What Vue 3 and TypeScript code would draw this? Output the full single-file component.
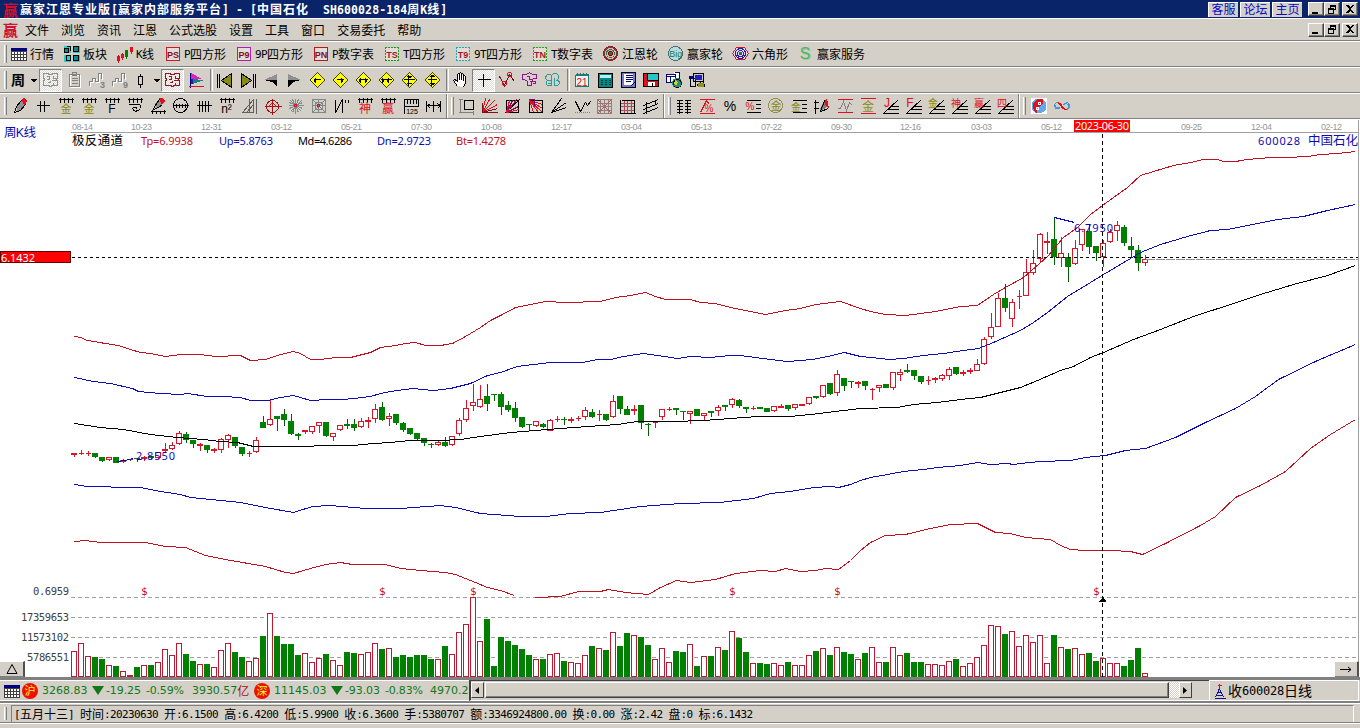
<script setup lang="ts">
import { h } from 'vue'

type Part = [kind: 's' | 'f' | 't', color: string, d: string]
interface Bar { x: number; up: boolean; high: number; low: number; top: number; bottom: number; vol: number }

/* Splits mixed text so that ideographs and half-width characters keep a 2:1 cell */
const Mixed = (props: { text: string }) =>
  h('span', { class: 'mixed' },
    (props.text.match(/[\u4e00-\u9fff]+|[^\u4e00-\u9fff]+/g) ?? []).map(run =>
      h('span', { class: /[\u4e00-\u9fff]/.test(run) ? 'cjk' : 'half' }, run)))
Mixed.props = ['text']

/* Small icons on a 20x20 grid */
const Icon = (props: { parts: Part[] }) =>
  h('svg', { class: 'icon', viewBox: '0 0 20 20', width: 20, height: 20 },
    props.parts.map(([kind, color, d]) => {
      if (kind === 't') {
        const [x, y, size, label, weight] = d.split(' ')
        return h('text', { x, y, 'font-size': size, fill: color, 'text-anchor': 'middle', 'font-weight': weight ?? '400' }, label)
      }
      return kind === 's'
        ? h('path', { d, stroke: color, fill: 'none', transform: 'translate(.5 .5)' })
        : h('path', { d, fill: color })
    }))
Icon.props = ['parts']

const K = '#000', R = '#e01020', G = '#808080', O = '#8a8a10', T = '#2a9a9a', N = '#000080', W = '#fff'
const circle = (cx: number, cy: number, r: number) => `M${cx - r} ${cy}a${r} ${r} 0 1 0 ${2 * r} 0a${r} ${r} 0 1 0 ${-2 * r} 0`
const comb: Part = ['s', K, 'M2 3H17M4 1V6M8 1V6M12 1V6M16 1V6']
const boxed = (label: string, frame: string, dashed = false): Part[] => [
  ['f', frame, 'M3 3H17V17H3Z'],
  ['f', '#e4dcd8', 'M4 4H16V16H4Z'],
  ...(dashed ? [['f', '#d4d0c8', 'M5 3h1v1h-1zM8 3h1v1h-1zM11 3h1v1h-1zM14 3h1v1h-1zM5 16h1v1h-1zM8 16h1v1h-1zM11 16h1v1h-1zM14 16h1v1h-1zM3 5h1v1h-1zM3 8h1v1h-1zM3 11h1v1h-1zM3 14h1v1h-1zM16 5h1v1h-1zM16 8h1v1h-1zM16 11h1v1h-1zM16 14h1v1h-1z'] as Part] : []),
  ['t', label[0] === 'P' ? '#801020' : '#a01828', `10 13.500 9 ${label} 700`],
]
const ring: Part[] = [['f', '#d8b8b0', circle(9.5, 9.5, 7)], ['s', '#902028', circle(9, 9, 7)], ['s', '#803838', circle(9, 9, 6)], ['s', '#207850', circle(9, 9, 4)], ['s', '#800000', circle(9, 9, 2)], ['f', '#207850', 'M8 8h3v3h-3z']]

const functions: { label: string; w: number; parts: Part[] }[] = [
  { label: '行情', w: 53, parts: [['f', W, 'M2 4H18V17H2Z'], ['s', '#404040', 'M2 4H17V16H2ZM2 7H17M2 10H17M2 13H17M5 7V16M8 7V16M11 7V16M14 7V16'], ['f', N, 'M2 4H18V7H2Z']] },
  { label: '板块', w: 53, parts: [['f', '#30c8c8', 'M2 2H9V9H2ZM11 2H18V9H11ZM2 11H9V18H2ZM11 11H18V18H11Z'], ['s', K, 'M2 4H6V8H2ZM11 2H16V7H11ZM4 11H8V16H4ZM11 11H16V16H11ZM4 2H8V6'], ['f', '#108888', 'M3 5H6V8H3ZM12 12H16V16H12ZM12 3H16V7H12Z']] },
  { label: 'K线', w: 48, parts: [['s', R, 'M3 10V18M2 12H4V16H2ZM7 8V15M6 10H8V13H6ZM16 2V9M15 3H17V7H15Z'], ['s', '#008000', 'M11 5V14M10 6H12V12H10Z']] },
  { label: 'P四方形', w: 71, parts: boxed('PS', '#d01828') },
  { label: '9P四方形', w: 77, parts: boxed('P9', '#b020b0') },
  { label: 'P数字表', w: 71, parts: boxed('PN', '#b02018') },
  { label: 'T四方形', w: 71, parts: boxed('TS', '#10a010', true) },
  { label: '9T四方形', w: 77, parts: boxed('T9', '#18b0b8', true) },
  { label: 'T数字表', w: 71, parts: boxed('TN', '#10b010', true) },
  { label: '江恩轮', w: 65, parts: ring },
  { label: '赢家轮', w: 65, parts: [['f', '#b8dcd8', circle(9.5, 9.5, 7)], ['s', '#407080', circle(9, 9, 7)], ['t', '#207858', '9.8 13 9 Big']] },
  { label: '六角形', w: 65, parts: [['f', '#e8d8e8', 'M5 3H13L17 9L13 15H5L1 9Z'], ['s', R, 'M5 3H13L17 9L13 15H5L1 9Z'], ['s', '#2020a0', circle(9, 9, 5)], ['s', '#2020d0', circle(9, 9, 3)], ['f', '#108040', 'M8 8h3v3h-3z']] },
  { label: '赢家服务', w: 80, parts: [['t', '#98d0a0', '10 16 17 S 700'], ['t', '#58b068', '9 15 16 S']] },
]

const diamond = (arrow: string): Part[] => [['f', '#404000', 'M10 2L18 10L10 18L2 10Z'], ['f', '#ffff00', 'M10 3L17 10L10 17L3 10Z'], ['s', K, arrow]]
const blob = 'M2 3H6L8 4H10L12 3H16V7L15 9L16 11V15H11L9 16L7 15H2V11L3 9L2 7Z'
const puzzle = (c: string): Part[] => [['s', c, blob + 'M5 6H8V9H5M12 5V8H15M10 10H14M6 12H9V10M12 12V14']]
const wave = (sub: string): Part[] => [['s', W, 'M3 16V12H6V9H9V12H12V4H15V9'], ['s', G, 'M2 15V11H5V8H8V11H11V3H14V8'], ['t', G, `15.500 18 9 ${sub} 700`]]
const down: Part[] = [['f', K, 'M7 9H14L10.500 12.500Z']]

const views: { parts: Part[]; w?: number; on?: boolean; sep?: boolean }[] = [
  { parts: [['t', K, '10 15 14 周 700']], w: 18 },
  { parts: down, w: 12 },
  { parts: puzzle('#909090'), on: true },
  { parts: [['s', W, 'M6 5H16V17H6Z'], ['s', G, 'M5 4H15V16H5ZM8 2H12V5H8ZM7 8H13M7 10H13M7 13H13']] },
  { parts: wave('3') }, { parts: wave('9') },
  { parts: [['s', K, 'M9 3V6M7 6H11V14H7ZM9 14V17']], w: 20 },
  { parts: down, w: 10 },
  { parts: puzzle('#a01020'), on: true },
  { parts: [['s', N, 'M4 2V17'], ['f', '#e020c0', 'M5 3L16 9H5Z'], ['f', '#108080', 'M6 9L18 10L6 14Z'], ['f', '#2020a0', 'M5 9H7V14H5Z'], ['s', R, 'M2 16H17']], sep: true },
  { parts: [['s', K, 'M2 3V17M4 3V17'], ['f', O, 'M17 3V18L6 10.500Z'], ['s', K, 'M16 3V17L6 10Z']] },
  { parts: [['s', K, 'M17 3V17M15 3V17'], ['f', O, 'M3 3V18L14 10.500Z'], ['s', K, 'M3 3V17L13 10Z']] },
  { parts: [['f', '#909090', 'M16 4V10H3Z'], ['f', K, 'M3 10H16V17L11 12Z']] },
  { parts: [['f', '#909090', 'M4 4V10H17Z'], ['f', K, 'M17 10H4V17L9 12Z']] },
  { parts: diamond('M6 9H13M8 7V12M7 8V11') },
  { parts: diamond('M6 9H13M11 7V12M12 8V11') },
  { parts: diamond('M5 9H14M7 7V12M12 7V12M6 8V11M13 8V11') },
  { parts: diamond('M4 9H15M6 7V12M7 8V11M12 7V12M11 8V11') },
  { parts: diamond('M4 9H15M9 4V15M7 6H12M8 7H11M7 13H12') },
  { parts: diamond('M5 9H14M9 4V15M8 5H11M7 6H12M8 14H11M7 13H12'), sep: true },
  { parts: [['f', W, 'M6 16L2 10L4 9L7 12V3H9L14 6V12L12 17Z'], ['s', K, 'M6 16L2 10Q3 8 6 11V4Q7 2 8 4V9V3Q9 1 10 3V9V4Q11 2 12 4V10V6Q13 4 14 7V12L12 17']] },
  { parts: [['s', K, 'M3 9H16M9 3V16']], on: true },
  { parts: [['s', '#701018', 'M2 6L7 15L12 4L17 11'], ['s', R, circle(7, 13, 2) + circle(12, 4, 2)]] },
  { parts: [['s', '#901090', 'M2 4H6L9 2L12 4H16V8H13L11 11V15H7V11L4 9H2ZM6 6H9V9H12M9 11H15V13H12']] },
  { parts: [['s', T, 'M3 5Q6 2 8 5Q11 1 14 4Q17 7 14 9Q18 13 14 15H11V7M8 5V15H4Q1 12 4 10Q1 8 3 5M4 10H7M12 10H15M4 13H7']], sep: true },
  { parts: [['f', '#e8f4f4', 'M4 6H17V17H4Z'], ['s', '#207878', 'M3 5H16V16H3ZM3 4H16M5 2V4M8 2V4M11 2V4M14 2V4'], ['t', R, '10 15.500 10 21']] },
  { parts: [['f', '#008888', 'M3 3H18V18H3Z'], ['s', K, 'M3 3H17V17H3Z'], ['f', '#b8f0f0', 'M5 5H16V8H5Z'], ['s', '#003838', 'M5 10H7M9 10H11M13 10H15M5 12H7M9 12H11M13 12H15M5 14H7M9 14H11M13 14H15']] },
  { parts: [['f', '#7878c8', 'M3 3H18V18H3Z'], ['s', K, 'M3 2H17V17H3Z'], ['f', W, 'M6 4H15V15H6Z'], ['s', N, 'M7 5H14M7 7H14M7 9H14M7 11H12M12 16L16 12']] },
  { parts: [['f', R, 'M2 3H18V17H2Z'], ['f', '#20c8c8', 'M6 3H17V10H6Z'], ['f', W, 'M7 12H14V17H7Z'], ['s', K, 'M2 3H17V16H2ZM6 3V10H17M11 12V15']] },
  { parts: [['f', W, 'M2 4H12V13H2ZM10 2H16V8H10Z'], ['s', N, 'M2 4H11V12H2ZM2 6H11M6 6V12M10 2H15V8'], ['f', '#209078', circle(13, 13, 5)], ['s', K, circle(13, 13, 4)], ['f', '#d8d020', 'M11 10l3 2-2 4-2-2z']] },
  { parts: [['f', '#c8c8c8', 'M7 3H17V12H7Z'], ['s', K, 'M6 3H16V11H6ZM3 8H8V16H3ZM10 14L16 10L17 16H11Z'], ['f', '#2020c0', 'M8 5H15V10H8Z'], ['f', '#90901c', 'M11 13h6v4h-6z'], ['f', N, 'M2 6h4v3h-4z']] },
]

const pen: Part[] = [['f', '#909090', 'M6 11L11 4L16 9L8 16Z'], ['f', R, 'M11 4L14 2L17 5L15 10Z'], ['s', K, 'M11 4L6 10L4 16L10 14L15 8M3 16H5']]
const fan = (label: string, color: string): Part[] => [['s', K, 'M1 17H17M5 13H17M9 10H17M2 17L17 3'], ['t', color, `6 11 ${label > 'Z' ? 10 : 12} ${label}`]]
const gann: Part[] = [
  ['s', K, 'M3 4H15V16H3ZM2 16L17 2'], ['s', '#800080', 'M3 16L9 4M3 16L15 10'], ['s', R, 'M3 16L6 4M3 16L13 3M3 16L16 13'],
]
const groups: Part[][][] = [
  [
    pen,
    [['s', K, 'M3 9H16M7 4V15M11 4V15']],
    [comb, ['t', O, '10 17 11 金']],
    [comb, ['t', O, '10 17 11 金']],
    [comb, ['t', K, '10 17 12 F']],
    [comb, ['s', K, 'M3 8H13Q16 8 15 12Q12 16 8 14Q6 11 10 11L12 12']],
    [['f', '#909090', 'M7 8L11 3L15 8L8 12Z'], ['f', R, 'M11 2L15 2L17 5L14 9Z'], ['s', K, 'M11 3L6 10L5 13L10 11L14 8M2 15H17M4 13V17M8 14V17M12 14V17M16 13V17']],
    [['s', K, circle(9, 9, 7) + 'M2 9H17M5 7V11M8 7V11M11 7V11M14 7V11']],
    [['s', K, 'M2 9H17M5 4V15M8 4V15M11 4V15M14 4V15']],
    [comb, ['t', K, '9.500 17 12 n²']],
    [['s', '#606060', 'M2 16L13 3V16ZM6 16L13 8M9 2V16M16 2V17']],
    [['s', '#a01018', circle(9, 10, 6) + 'M1 10H18M9 2V18'], ['s', R, 'M6 10Q6 7 9 7Q12 7 12 10']],
    [['s', '#809090', 'M9 2V17M2 9H17M4 4L15 15M15 4L4 15M6 3L12 16M12 3L6 16M3 6L16 12M3 12L16 6'], ['s', R, circle(9, 9, 1)]],
    [['s', '#808888', 'M3 3H16V16H3ZM6 6H13V13H6ZM9 3V16M3 9H16M3 3L16 16M16 3L3 16'], ['s', R, circle(9, 9, 1)]],
    [['s', K, 'M3 3V16L10 3V16M13 3V6M16 3V6']],
    [comb, ['t', R, '10 17 12 神']],
    [comb, ['t', R, '10 17 12 赢']],
    [['s', K, 'M3 3H17V10H3ZM6 3V7M9 3V7M12 3V7M15 3V7M3 3V17'], ['t', K, '11 18 7 125']],
    [['s', K, 'M2 4V15M16 4V15M9 4V15M3 9H16M6 7L3 9L6 12M13 7L16 9L13 12']],
  ],
  [
    [['s', K, 'M7 4H16V13H7Z'], ['s', G, 'M3 3V16M1 3H5M1 16H16M16 14V18']],
    [['s', R, 'M2 16L5 2M2 16L9 3M2 16L14 4M2 16L17 8'], ['s', '#801018', 'M2 16L17 12M2 6V16M2 16H17']],
    gann,
    [['s', K, 'M3 4H16V16H3Z'], ['s', R, 'M3 4L7 16M3 4L12 16M3 4L16 16M3 4L16 12M3 4L16 8'], ['s', '#800080', 'M2 3H8V9']],
    [['s', K, 'M2 16L12 2M2 16L17 6M2 16L17 11']],
    [['s', K, 'M3 5L8 15L13 6L15 9L18 5'], ['s', G, 'M2 16h1m1 0h1m1 0h1m1 0h1m1 0h1m1 0h1m1 0h1m1 0h1']],
    [['s', '#908080', 'M2 3H16V17H2ZM5 3V17M9 3V17M13 3V17M2 7H16M2 10H16M2 14H16'], ['s', '#d05060', 'M2 17L16 3M2 3L16 17']],
    [['s', '#b04858', 'M6 3V17M9 3V17M13 3V17M2 7H16M2 10H16M2 14H16'], ['s', K, 'M2 3V17H17M3 4H16V16']],
    [['s', K, 'M2 9L17 3M2 13L17 7M2 17L17 11M5 5V17M14 3V8']],
  ],
  [
    [['s', K, 'M5 3V17M13 3V17M2 4H8M2 7H8M2 10H8M2 13H8M2 16H8M10 4H16M10 7H16M10 10H16M10 13H16M10 16H16']],
    [['s', R, 'M2 3H17M2 17H17M3 16L9 4L12 8'], ['t', R, '12 16 10 %']],
    [['t', K, '10 15 14 %']],
    [['s', K, 'M3 4H17M12 8H17M12 12H17M3 16H17'], ['t', R, '7 14 10 %']],
    [['s', '#909050', circle(9, 9, 7)], ['t', O, '10 14 11 金']],
    [['s', K, 'M3 4H17M12 8H17M12 12H17M3 16H17'], ['t', O, '7 15 10 金']],
    [['s', K, 'M3 3V17M1 6H6M1 12H6'], ['f', '#808080', 'M8 13L12 5L15 11L9 15Z'], ['f', R, 'M12 4L15 3L17 12L13 9Z'], ['s', K, 'M12 4L8 15L16 12']],
    [['s', R, 'M2 3H17M2 16H17'], ['s', G, 'M2 12H5L8 5L11 14L14 6L17 9']],
    [['s', R, 'M2 2H17M2 17H17'], ['t', O, '10 15 12 金']],
    fan('J', R), fan('F', R), fan('金', O), fan('神', R), fan('赢', R), fan('四', R),
  ],
  [
    [['f', '#fff', 'M2 2H18V18H2Z'], ['f', '#60a8f0', circle(10, 10, 7.5)], ['f', '#e01020', 'M14 3A7.500 7.500 0 1 0 9 17.500Q6 13 10 11Q15 9 14 3Z'], ['s', '#fff', circle(10, 7, 1) + circle(8, 12, 1)]],
    [['s', '#4098d0', 'M8 11Q4 14 2 10Q2 6 5 6M8 10Q4 13 3 9M12 7Q17 5 17 10Q16 13 13 13M11 8Q16 6 16 10'], ['s', R, 'M5 6Q8 6 10 10Q11 13 14 13M5 7Q8 7 9 10Q10 13 13 12']],
  ],
]

const menus = ['文件', '浏览', '资讯', '江恩', '公式选股', '设置', '工具', '窗口', '交易委托', '帮助']

/* high, low, body top, body bottom in thirds of a pixel below each section's base line */
const sections: [base: number, rows: string][] = [
  [320, `r398 410 401 404|r387 403 400 401|r390 405 399 401|g396 411 399 408|g410 423 411 420|r410 420 411 419|g410 426 411 426|r416 427 420 424|r415 420 418 419|g412 423 415 416|r405 420 412 414|g405 416 408 411|r393 414 397 411|r366 393 388 391|r363 387 376 386|r330 372 339 371|g333 366 342 357|g360 381 361 369|r366 390 374 376|g375 396 376 389|r381 396 388 391|r351 396 357 387|r339 381 345 357|g352 381 353 377|g380 405 381 399|r390 408 399 401|r350 396 360 395|g285 323 306 321|r234 316 297 314|g285 330 290 295|g264 315 282 299|g279 344 303 341|g336 357 343 345|r327 341 331 335|r315 341 319 335|r303 336 307 317|g306 350 307 347|r336 360 340 350|r312 330 316 329|g294 326 313 316|g294 330 312 322|r291 323 303 320|r288 321 302 305|r249 306 267 296|g243 300 261 297|r276 315 288 296|g282 314 283 308|g303 333 309 329|g323 342 324 339|g338 360 339 356|g351 375 354 368|g366 381 373 374|r357 375 366 374|g348 378 366 375|r345 375 348 374|r291 345 300 341|r237 303 264 299|r189 272 246 255|r192 261 237 260|g189 270 228 251|g219 240 222 223|g213 282 222 258|g240 273 255 269|g243 305 264 291|g288 321 291 320|g312 330 312 314|r300 320 303 317|g306 321 312 320|r294 332 300 331|r285 303 297 299|g290 312 297 299|r288 306 297 301|r285 300 294 296|r258 297 270 290|g264 291 276 290|r267 300 282 284|g282 302 282 299|r222 291 243 290|g228 279 228 266|g255 282 267 282|r252 284 267 271|g255 326 255 308|g306 345 312 314|r306 321 306 308|r264 297 267 290|r258 272 267 269|g264 284 264 268|g270 297 273 275|r270 309 273 281|g267 285 269 285|r276 300 280 285|g270 288 275 276|r252 285 261 271|g255 270 256 258|r231 261 237 254|g234 261 240 255|g261 276 262 264|r255 267 264 266|g258 266 262 264|g264 275 265 275|r255 273 259 270|r249 261 258 261|g255 270 256 264|r249 267 253 263|r249 257 252 255|r228 252 232 251|g225 236 229 231|r192 231 196 230|g189 222 189 221|r147 225 163 218|g174 210 174 195|g180 201 183 185|r182 201 186 191|g182 207 183 195|r201 239 207 209|r192 213 196 203|g189 201 192 201|r156 207 157 203|r144 180 156 164|g129 156 151 153|g150 177 151 165|g168 189 168 185|r165 192 180 182|r168 186 176 179|r159 180 166 176|r138 177 148 165|g141 162 141 161|r147 165 156 160|r141 161 151 154|r114 150 133 150|r48 134 57 131`],
  [140, `r516 596 562 590|r456 560 475 560|g429 513 474 503|r474 560 487 536|r447 504 468 470|r354 467 397 467|r327 402 370 398|r276 363 283 354|r273 339 304 307|g228 372 297 350|r288 378 340 352|g336 423 353 380|r297 374 325 371|r267 330 267 314|g252 339 273 318|g318 360 318 338|r297 380 310 350|r264 306 277 305|r240 300 255 270|g252 315 261 308|g288 348 318 329|g312 390 330 368|r342 375 358 368`],
]
const volumes = '214 190 229 231 237 256 258 274 286 262 256 256 247 208 226 190 223 243 253 253 262 211 190 216 231 244 235 168 100 168 192 192 225 220 247 235 223 241 256 216 219 223 217 190 207 205 231 225 231 225 225 237 238 198 223 157 133 52 184 117 258 171 183 195 207 225 238 237 223 220 243 247 250 226 198 205 210 157 198 159 166 171 195 238 205 247 213 216 193 258 229 228 202 210 154 174 216 250 249 252 250 256 246 256 256 226 213 205 225 202 216 222 238 219 202 247 246 202 226 219 246 246 253 253 256 244 237 259 250 232 196 136 139 162 154 199 166 187 166 250 165 202 207 205 223 219 243 235 250 250 258 240 204 280'.split(' ').map(Number)

const bars: Bar[] = sections
  .flatMap(([base, rows]) => rows.split('|').map(row => ({
    up: row[0] === 'r',
    v: row.slice(1).split(' ').map(n => Math.floor(base + Number(n) / 3)),
  })))
  .map(({ up, v }, i) => ({ x: 74 + i * 7, up, high: v[0], low: v[1], top: v[2], bottom: v[3], vol: Math.floor(580 + volumes[i] / 3) }))

const curves: { color: string; pts: string }[] = [
  { color: '#c01020', pts: '74,336 80,337 87,340 105,343 118,345 130,349 140,352 150,353 165,356 180,354 200,354 215,356 240,355 250,360 265,359 280,354 293,351 300,353 310,359 320,359 335,357 350,357 370,352 380,347 395,345 405,343 415,342 425,345 440,345 452,343 465,336 480,327 490,320 500,315 515,307 530,304 545,301 565,302 600,301 615,297 630,295 645,292 655,296 665,299 690,299 700,302 715,303 730,307 745,310 765,314 785,310 800,308 815,304 840,301 860,308 870,311 885,314 905,315 920,313 935,311 960,306 977,305 993,294 1005,287 1023,277 1047,256 1063,237 1077,227 1090,214 1102,205 1113,197 1127,187 1140,175 1153,171 1173,165 1190,162 1203,159 1217,159 1223,161 1235,161 1247,159 1270,157 1287,157 1307,156 1320,154 1337,153 1355,151' },
  { color: '#0c0cb4', pts: '74,377 93,381 110,383 132,388 138,391 160,393 180,394 187,393 207,396 223,396 240,397 250,400 267,400 280,397 293,395 300,397 310,400 327,399 343,399 353,398 370,396 380,393 390,391 412,388 433,390 450,388 470,383 487,375 500,372 517,366 533,364 550,362 582,362 597,359 610,359 623,356 643,353 657,355 677,358 690,356 710,357 730,355 740,355 755,357 770,359 787,361 812,359 827,356 844,352 860,356 880,358 888,359 903,358 923,355 943,353 963,350 978,348 993,342 1020,330 1033,322 1047,312 1067,296 1090,282 1103,274 1120,264 1140,252 1160,244 1187,236 1210,230 1227,229 1247,225 1277,219 1303,216 1327,210 1355,204' },
  { color: '#000', pts: '74,423 100,427 123,429 150,434 177,437 203,439 220,441 237,442 253,446 293,446 307,446 320,445 353,445 373,443 390,442 410,440 440,440 460,439 480,436 510,432 547,429 573,427 617,424 637,421 673,421 703,420 730,418 757,416 790,416 810,414 843,410 860,408 897,407 913,404 937,402 960,399 980,397 1000,392 1020,387 1037,380 1060,370 1073,366 1090,357 1103,352 1133,339 1160,329 1193,316 1233,303 1260,294 1293,284 1327,275 1355,265' },
  { color: '#0c0cb4', pts: '74,484 87,486 105,486 115,487 140,487 160,491 180,494 190,497 220,500 240,502 265,507 293,512 312,506 330,505 365,508 400,508 440,505 455,507 480,513 520,516 545,516 570,513 600,512 640,506 680,503 720,502 736,500 753,498 770,493 790,491 813,487 830,486 838,487 850,484 860,480 870,477 887,474 903,471 923,469 937,467 960,465 977,462 990,464 1007,463 1013,464 1020,463 1040,461 1070,460 1085,457 1105,455 1125,450 1145,448 1175,437 1205,422 1235,408 1255,396 1278,379 1317,360 1355,344' },
  { color: '#c01020', pts: '74,541 85,540 100,542 145,542 165,546 185,547 205,555 225,559 265,566 285,572 293,573 310,568 325,564 340,562 352,564 385,564 400,568 420,570 445,572 455,574 465,578 475,582 487,587 500,590 514,595' },
  { color: '#c01020', pts: '535,597 560,596 578,591 600,591 608,589 625,592 648,594 660,587 676,580 690,582 715,579 735,573 760,570 775,571 785,568 800,571 815,570 825,568 838,569 850,560 860,550 870,542 885,535 905,534 930,528 950,524 977,523 995,532 1010,533 1025,537 1050,539 1060,545 1070,549 1085,550 1110,550 1130,551 1142,554 1165,543 1200,525 1215,516 1235,497 1260,485 1285,471 1310,448 1330,434 1355,419' },
]

const dates: [string, number][] = [
  ['08-14', 72], ['10-23', 131], ['12-31', 201], ['03-12', 271], ['05-21', 341], ['07-30', 411], ['10-08', 481], ['12-17', 551], ['03-04', 621],
  ['05-13', 691], ['07-22', 761], ['09-30', 831], ['12-16', 900], ['03-03', 971], ['05-12', 1041], ['09-25', 1181], ['12-04', 1251], ['02-12', 1321],
]
const legend: [string, number, number, string][] = [
  ['Tp=6.9938', 141, 52, '#c81020'], ['Up=5.8763', 219, 54, '#0c0cb4'], ['Md=4.6286', 298, 54, '#000'], ['Dn=2.9723', 377, 54, '#0c0cb4'], ['Bt=1.4278', 456, 50, '#c81020'],
]
const scale: [string, number, number][] = [['0.6959', 595, 36], ['17359653', 621, 48], ['11573102', 641, 48], ['5786551', 661, 42]]
const dollars = [144, 382, 473, 732, 837, 1096]
const table: Part[] = functions[0].parts
const tower: Part[] = [['s', '#101090', 'M9 7L5 16M9 7L13 16M4 17H15M7 11H11M6 14H12'], ['s', R, 'M9 2V7M7 4H11']]
const footer = '[五月十三] 时间:20230630 开:6.1500 高:6.4200 低:5.9900 收:6.3600 手:5380707 额:3346924800.00 换:0.00 涨:2.42 盘:0 标:6.1432'
</script>

<template>
  <div class="app">
    <header class="title">
      <span class="seal">赢</span>
      <Mixed class="caption" text="赢家江恩专业版[赢家内部服务平台] - [中国石化  SH600028-184周K线]" />
      <span class="link" v-for="l in ['客服', '论坛', '主页']" :key="l">{{ l }}</span>
      <div class="winbtns">
        <i class="wb"><svg width="12" height="11"><path d="M2 8h6v2h-6z" /></svg></i>
        <i class="wb"><svg width="12" height="11"><path d="M4 1h6v5h-2v-1h1v-2h-4v1h-1zM2 4h6v6h-6zM3 6v3h4v-3z" fill-rule="evenodd" /></svg></i>
        <i class="wb last"><svg width="12" height="11"><path d="M2 1h2l2 2 2-2h2l-3 4 3 4h-2l-2-2-2 2h-2l3-4z" /></svg></i>
      </div>
    </header>

    <nav class="menu">
      <span class="seal">赢</span>
      <span class="item" v-for="m in menus" :key="m">{{ m }}</span>
      <div class="winbtns">
        <i class="wb"><svg width="12" height="11"><path d="M2 8h6v2h-6z" /></svg></i>
        <i class="wb"><svg width="12" height="11"><path d="M4 1h6v5h-2v-1h1v-2h-4v1h-1zM2 4h6v6h-6zM3 6v3h4v-3z" fill-rule="evenodd" /></svg></i>
        <i class="wb last"><svg width="12" height="11"><path d="M2 1h2l2 2 2-2h2l-3 4 3 4h-2l-2-2-2 2h-2l3-4z" /></svg></i>
      </div>
    </nav>

    <div class="bar labelled">
      <i class="grip" />
      <div class="fn" v-for="f in functions" :key="f.label" :style="{ width: f.w + 'px' }">
        <Icon :parts="f.parts" /><Mixed :text="f.label" />
      </div>
    </div>

    <div class="bar views">
      <i class="grip" />
      <template v-for="(v, i) in views" :key="i">
        <span class="btn" :class="{ on: v.on }" :style="{ width: (v.w ?? 23) + 'px' }"><Icon :parts="v.parts" /></span>
        <i v-if="v.sep" class="sep" />
      </template>
    </div>

    <div class="bar tools">
      <div class="group" v-for="(g, i) in groups" :key="i">
        <i class="grip" />
        <span class="btn" v-for="(parts, j) in g" :key="j"><Icon :parts="parts" /></span>
      </div>
    </div>

    <main class="stage">
      <svg class="chart" width="1360" height="558" viewBox="0 119 1360 558">
        <g class="crisp">
          <path d="M71 132.500H1358" stroke="#a0a0a0" />
          <path v-for="y in [597, 617, 637, 657]" :key="y" :d="`M71 ${y}.5H1358`" stroke="#a0a0a0" stroke-dasharray="4 3" />
        </g>
        <g class="date">
          <text v-for="[d, x] in dates" :key="x" :x="x" y="130" textLength="21">{{ d }}</text>
        </g>
        <text x="4" y="136.500" class="zh blue" textLength="32">周K线</text>
        <text x="72" y="145" class="zh" textLength="51">极反通道</text>
        <text v-for="[t, x, w, c] in legend" :key="t" :x="x" y="145" class="lat" :textLength="w" :fill="c">{{ t }}</text>
        <text x="1258" y="145" class="lat blue" textLength="42">600028</text>
        <text x="1308" y="145" class="zh blue" textLength="50">中国石化</text>
        <text v-for="[t, y, w] in scale" :key="t" :x="69 - w" :y="y" class="axis" :textLength="w">{{ t }}</text>

        <g class="crisp" transform="translate(.5 .5)">
          <g v-for="b in bars" :key="b.x">
            <template v-if="b.up">
              <path :d="`M${b.x} ${b.high}V${b.top}M${b.x} ${b.bottom}V${b.low}M${b.x - 3} ${b.top}h5V${b.bottom}h-5Z`" class="up" />
              <rect :x="b.x - 3" :y="b.vol" width="5" :height="676 - b.vol" class="up vol" />
            </template>
            <template v-else>
              <path :d="`M${b.x} ${b.high}V${b.low}`" stroke="#006000" />
              <path :d="`M${b.x - 3.500} ${b.top - .5}h6v${b.bottom - b.top + 1}h-6Z`" fill="#008000" />
              <path :d="`M${b.x - 3.500} ${b.vol - .5}h6V677h-6Z`" fill="#008000" />
            </template>
          </g>
          <polyline v-for="(c, i) in curves" :key="i" :points="c.pts" fill="none" :stroke="c.color" />
          <path d="M117 461L124 460L133 458M1054 217L1074 222" stroke="#0c0cb4" />
          <path d="M71 257H1358" stroke="#000" stroke-dasharray="3 3" />
          <path d="M1145 259H1358" stroke="#909090" stroke-dasharray="9 1" />
          <path d="M1102 133V676" stroke="#000" stroke-dasharray="4 3" />
          <path d="M1099 601h7l-3.500-5z" fill="#000" />
          <path d="M1358 119V661" stroke="#a0a0a0" />
        </g>
        <text x="136" y="460" class="lat blue" textLength="39">2.8550</text>
        <text x="1074" y="232" class="lat blue" textLength="39">6.7950</text>
        <text v-for="x in dollars" :key="x" :x="x - 3" y="595" class="dollar">$</text>
        <rect x="1074" y="120" width="56" height="12" fill="#f00" />
        <text x="1075" y="130" class="lat" fill="#fff" textLength="54">2023-06-30</text>
        <rect x=".5" y="251.500" width="70" height="11" fill="#f00" stroke="#600" class="crisp" />
        <text x="1" y="261.500" class="lat" fill="#fff" textLength="34">6.1432</text>
      </svg>
      <button class="corner left"><svg width="14" height="12"><path d="M2 10.500H12L7 1.500Z" fill="none" stroke="#000" /></svg></button>
      <button class="corner right"><svg width="14" height="10"><path d="M1 5.500H12M9 3L12 5.500L9 8" fill="none" stroke="#000" /></svg></button>
    </main>

    <section class="quotes">
      <div class="ticker">
        <Icon :parts="table" />
        <b class="coin">沪</b><span class="q1">3268.83</span><i class="fall" /><span class="q2">-19.25</span><span class="q3">-0.59%</span><span class="q4">3930.57<em>亿</em></span>
        <b class="coin">深</b><span class="q5">11145.03</span><i class="fall" /><span class="q2">-93.03</span><span class="q3">-0.83%</span><span class="q6">4970.2</span>
      </div>
      <div class="scroll">
        <i class="arrow"><svg width="5" height="7"><path d="M4 0V7L0 3.500Z" /></svg></i>
        <i class="thumb" /><i class="track" />
        <i class="arrow"><svg width="5" height="7"><path d="M0 0V7L4 3.500Z" /></svg></i>
      </div>
      <div class="feed"><Icon :parts="tower" /><Mixed text="收600028日线" /></div>
    </section>

    <footer class="info">
      <i class="grip" />
      <div class="field"><Mixed :text="footer" /></div>
    </footer>
  </div>
</template>

<style>
html, body { margin: 0; background: #d4d0c8; overflow: hidden; }
</style>

<style scoped>
.app {
  width: 1360px; height: 728px; overflow: hidden; background: #d4d0c8; color: #000;
  font: 12px/14px "Liberation Sans", "Noto Sans CJK SC", sans-serif; display: flex; flex-direction: column;
}
.app :deep(.mixed) { white-space: pre; display: inline-flex; align-items: center; padding-top: 1px; }
.app :deep(.half) { font-family: "DejaVu Sans Mono", monospace; font-size: 11px; letter-spacing: -.62px; }
.app :deep(.icon) { flex: none; shape-rendering: crispEdges; font-family: "Liberation Sans", "Noto Sans CJK SC", sans-serif; }
.title { height: 18px; background: #0a246a; color: #fff; display: flex; align-items: center; padding-left: 3px; box-sizing: border-box; }
.seal { width: 17px; color: #d01030; font: bold 15px/17px "Noto Sans CJK SC", sans-serif; flex: none; }
.caption { font-weight: 700; flex: 1; }
.caption :deep(.cjk) { letter-spacing: 1px; }
.caption :deep(.half) { font-size: 11.500px; letter-spacing: .08px; }
.link {
  width: 30px; height: 15px; margin-right: 2px; background: #d4d0c8; color: #0808c8; text-align: center;
  font: 12px/14px "Liberation Sans", "Noto Sans CJK SC", sans-serif; border-left: 1px solid #fff; border-top: 1px solid #fff; box-sizing: border-box;
}
.winbtns { display: flex; margin-left: auto; padding-right: 2px; }
.title .winbtns { margin-left: 4px; }
.wb { width: 16px; height: 14px; box-sizing: border-box; background: #d4d0c8; border: 1px solid; border-color: #fff #404040 #404040 #fff; box-shadow: inset -1px -1px #808080; display: flex; align-items: center; justify-content: center; }
.wb svg { shape-rendering: crispEdges; flex: none; }
.wb.last { margin-left: 2px; }
.menu { height: 23px; display: flex; align-items: center; padding-left: 3px; border-top: 1px solid #fff; border-bottom: 1px solid #808080; box-sizing: border-box; }
.menu .seal { width: 22px; }
.item { margin-right: 12px; padding-top: 2px; }
.bar { height: 26px; box-sizing: border-box; border-top: 1px solid #fff; border-bottom: 1px solid #808080; display: flex; align-items: center; }
.grip { width: 1px; height: 18px; margin-left: 4px; border-left: 1px solid #fff; border-right: 1px solid #808080; flex: none; }
.fn { display: flex; align-items: center; gap: 1px; white-space: nowrap; flex: none; }
.labelled .grip { margin-right: 2px; }
.btn { width: 23px; height: 23px; display: flex; align-items: center; justify-content: center; flex: none; }
.btn.on { box-sizing: border-box; border: 1px solid; border-color: #808080 #fff #fff #808080; background: repeating-conic-gradient(#fff 0 25%, #dcd9d2 0 50%) 0 0 / 2px 2px; }
.views .grip { margin-right: 2px; }
.sep { width: 1px; height: 22px; border-left: 1px solid #808080; border-right: 1px solid #fff; margin-left: 3px; flex: none; }
.group { display: flex; align-items: center; height: 24px; padding-right: 1px; border-right: 1px solid #808080; box-shadow: 1px 0 #fff; }
.group .grip { margin-right: 1px; }
.group:last-child { border: 0; box-shadow: none; }
.stage { height: 558px; position: relative; background: #fff; }
.chart { display: block; }
.chart text { font-family: "Liberation Sans", "Noto Sans CJK SC", sans-serif; }
.crisp { shape-rendering: crispEdges; }
.date text { font-size: 9px; fill: #989898; }
.zh { font-size: 12.500px; }
.chart .lat { font: 11px "Noto Sans", sans-serif; }
.blue { fill: #0c0cb4; }
.chart .axis { font: 10.500px "DejaVu Sans Mono", monospace; fill: #404040; }
.chart .dollar { font: 11px "DejaVu Sans Mono", monospace; fill: #c01020; }
.up { fill: #fff; stroke: #dc1428; }
.vol { stroke: #c01830; }
.corner { position: absolute; bottom: 0; height: 16px; padding: 0; background: #d4d0c8; border: 0; border-top: 1px solid #fff; border-right: 2px solid #505050; border-bottom: 1px solid #808080; display: flex; align-items: center; justify-content: center; }
.corner.left { left: 0; width: 25px; }
.corner.right { right: 1px; width: 24px; }
.quotes { height: 26px; box-sizing: border-box; border-top: 3px solid #808080; border-bottom: 2px solid #808080; display: flex; align-items: stretch; }
.ticker { width: 469px; box-sizing: border-box; padding-left: 2px; border-top: 1px solid #fff; border-bottom: 1px solid #fff; display: flex; align-items: center; overflow: hidden; white-space: nowrap; color: #107818; font: 11px/14px "DejaVu Sans", sans-serif; flex: none; }
.coin { width: 16px; height: 16px; border-radius: 50%; background: #f01000; color: #ffff20; font: 11px/15px "Noto Sans CJK SC", sans-serif; text-align: center; flex: none; }
.q1 { margin-left: 4px; width: 50px; }
.q2 { width: 40px; letter-spacing: -.1px; }
.q3 { width: 46px; letter-spacing: -.2px; }
.q4 { width: 62px; letter-spacing: -.05px; display: flex; align-items: center; }
.q4 em { font: 12px/14px "Noto Sans CJK SC", sans-serif; color: #a01010; letter-spacing: 0; }
.q5 { margin-left: 4px; width: 57px; }
.q6 { margin-left: -1px; }
.fall { width: 0; height: 0; border: 6px solid transparent; border-top: 9px solid #107818; border-bottom: 0; margin-right: 2px; flex: none; }
.scroll { width: 740px; box-sizing: border-box; border-left: 2px solid #404040; border-top: 1px solid #404040; border-bottom: 1px solid #fff; display: flex; padding: 1px 17px 2px 0; flex: none; }
.arrow { width: 13px; box-sizing: border-box; border: 1px solid; border-color: #fff #404040 #404040 #fff; display: flex; align-items: center; justify-content: center; flex: none; }
.thumb { flex: 1; border: 1px solid; border-color: #fff #404040 #404040 #fff; box-shadow: inset -1px -1px #808080; margin-left: 1px; }
.track { width: 10px; background: repeating-conic-gradient(#fff 0 25%, #d4d0c8 0 50%) 0 0 / 2px 2px; flex: none; }
.feed { flex: 1; border: 1px solid #fff; margin-right: 1px; display: flex; align-items: center; font-size: 14px; }
.feed :deep(.icon) { margin-right: -2px; }
.feed :deep(.half) { font-size: 12px; letter-spacing: -.22px; }
.info { height: 20px; box-sizing: border-box; border-top: 1px solid #fff; border-bottom: 1px solid #808080; box-shadow: 0 1px #fff; display: flex; align-items: center; }
.info .grip { height: 13px; margin-right: 4px; }
.info :deep(.mixed) { padding-top: 2px; }
.field { flex: 1; height: 16px; margin-right: 6px; border-left: 1px solid #808080; border-top: 1px solid #808080; border-right: 1px solid #fff; display: flex; align-items: center; padding-left: 2px; }
</style>
